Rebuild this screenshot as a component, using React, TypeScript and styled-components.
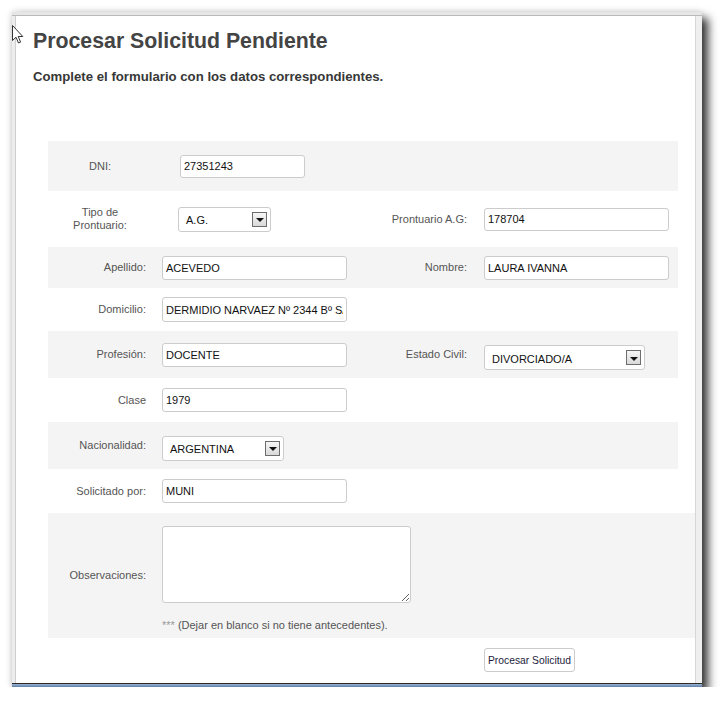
import React from "react";
import styled, { createGlobalStyle } from "styled-components";

const Global = createGlobalStyle`
  html, body { margin: 0; padding: 0; background: #ffffff; }
  body { font-family: "Liberation Sans", Arial, sans-serif; }
  * { box-sizing: border-box; }
`;

const Frame = styled.div`
  position: relative;
  margin: 12px 0 0 12px;
  width: 690px;
  height: 675px;
  display: flex;
  flex-direction: column;
  background: #ffffff;
  box-shadow: 6px 6px 9px rgba(0, 0, 0, 0.8), -1px -1px 6px rgba(0, 0, 0, 0.12);
`;

const TopBar = styled.div`
  height: 4px;
  background: #e6e6e6;
  border-bottom: 1px solid #b9b9b9;
`;

const Middle = styled.div`
  flex: 1;
  display: flex;
  min-height: 0;
`;

const LeftEdge = styled.div`
  width: 4px;
  background: #ededed;
  border-right: 1px solid #cfcfcf;
`;

const RightStrip = styled.div`
  width: 7px;
  background: #efefef;
  border-left: 1px solid #d6d6d6;
`;

const BottomBar = styled.div`
  height: 4px;
  border-top: 1px solid #2b2b2b;
  background: linear-gradient(#9ab3d2, #5f7fa8);
`;

const Content = styled.div`
  flex: 1;
  overflow: hidden;
  padding: 13px 0 0 17px;
  background: #ffffff;
`;

const Title = styled.h1`
  margin: 0;
  font-size: 21.3px;
  line-height: 24px;
  font-weight: bold;
  color: #444444;
`;

const Subtitle = styled.p`
  margin: 16px 0 0 0;
  font-size: 13.2px;
  line-height: 16px;
  font-weight: bold;
  color: #383838;
`;

const Table = styled.div<{ $top?: number }>`
  margin: ${(p) => p.$top ?? 0}px 0 0 15px;
  width: 630px;
`;

const Row = styled.div<{ $h: number; $gray?: boolean; $wide?: boolean; $cols: string }>`
  display: grid;
  grid-template-columns: ${(p) => p.$cols};
  align-items: center;
  height: ${(p) => p.$h}px;
  background: ${(p) => (p.$gray ? "#f4f4f4" : "transparent")};
  width: ${(p) => (p.$wide ? "660px" : "630px")};
`;

const Label = styled.div<{ $center?: boolean; $pr?: number }>`
  font-size: 11px;
  line-height: 13px;
  color: #555555;
  text-align: ${(p) => (p.$center ? "center" : "right")};
  padding-right: ${(p) => p.$pr ?? 16}px;
`;

const Cell = styled.div<{ $pl?: number; $top?: number }>`
  display: flex;
  flex-direction: column;
  align-items: flex-start;
  padding-left: ${(p) => p.$pl ?? 0}px;
  ${(p) => (p.$top !== undefined ? `align-self: start; padding-top: ${p.$top}px;` : "")}
`;

const Input = styled.input<{ $w: number; $h?: number }>`
  width: ${(p) => p.$w}px;
  height: ${(p) => p.$h ?? 24}px;
  border: 1px solid #cccccc;
  border-radius: 3px;
  background: #ffffff;
  padding: 0 3px;
  font-family: "Liberation Sans", Arial, sans-serif;
  font-size: 11px;
  color: #111111;
  outline: none;
`;

const SelectBox = styled.div<{ $w: number; $down?: number }>`
  width: ${(p) => p.$w}px;
  height: 25px;
  margin-top: ${(p) => p.$down ?? 0}px;
  border: 1px solid #cccccc;
  border-radius: 3px;
  background: #ffffff;
  display: flex;
  align-items: center;
  justify-content: space-between;
  padding: 0 3px 0 7px;
  font-size: 11px;
  color: #111111;
`;

const SelectText = styled.span`
  padding-top: 2px;
`;

const ArrowBtn = styled.span`
  width: 15px;
  height: 15px;
  border: 1px solid #6d6d6d;
  background: linear-gradient(#f6f6f6, #d9d9d9);
  display: flex;
  align-items: center;
  justify-content: center;
  &::after {
    content: "";
    width: 0;
    height: 0;
    border-left: 4px solid transparent;
    border-right: 4px solid transparent;
    border-top: 4px solid #111111;
    margin-top: 2px;
  }
`;

const TextArea = styled.textarea`
  width: 249px;
  height: 77px;
  border: 1px solid #cccccc;
  border-radius: 3px;
  background: #ffffff;
  margin: 0;
`;

const Note = styled.div`
  margin-top: 15px;
  font-size: 11px;
  line-height: 14px;
  color: #555555;
`;

const Stars = styled.span`
  color: #9a9a9a;
`;

const ButtonRow = styled.div`
  display: grid;
  grid-template-columns: 436px 194px;
  padding-top: 10px;
`;

const Button = styled.button`
  grid-column: 2;
  justify-self: start;
  height: 24px;
  padding: 0 3px;
  border: 1px solid #cccccc;
  border-radius: 3px;
  background: #ffffff;
  font-family: "Liberation Sans", Arial, sans-serif;
  font-size: 10.3px;
  color: #1c1c3c;
`;

const Cursor = styled.svg`
  position: absolute;
  left: 0px;
  top: 13px;
`;

const T1 = "104px 228px 104px 194px";
const T2 = "114px 218px 104px 194px";

const Select = ({ w, value, down }: { w: number; value: string; down?: number }) => (
  <SelectBox $w={w} $down={down}>
    <SelectText>{value}</SelectText>
    <ArrowBtn />
  </SelectBox>
);

export default function App() {
  return (
    <>
      <Global />
      <Frame>
        <TopBar />
        <Middle>
          <LeftEdge />
          <Content>
            <Title>Procesar Solicitud Pendiente</Title>
            <Subtitle>Complete el formulario con los datos correspondientes.</Subtitle>

            <Table $top={56}>
              <Row $h={50} $gray $cols={T1}>
                <Label $center $pr={0}>DNI:</Label>
                <Cell $pl={28}>
                  <Input $w={125} $h={23} defaultValue="27351243" />
                </Cell>
                <div />
                <div />
              </Row>
              <Row $h={56} $cols={T1}>
                <Label $center $pr={0}>
                  Tipo de
                  <br />
                  Prontuario:
                </Label>
                <Cell $pl={26}>
                  <Select w={93} value="A.G." />
                </Cell>
                <Label $pr={17}>Prontuario A.G:</Label>
                <Cell>
                  <Input $w={185} $h={23} defaultValue="178704" />
                </Cell>
              </Row>
            </Table>

            <Table>
              <Row $h={41} $gray $cols={T2}>
                <Label>Apellido:</Label>
                <Cell>
                  <Input $w={185} defaultValue="ACEVEDO" />
                </Cell>
                <Label $pr={17}>Nombre:</Label>
                <Cell>
                  <Input $w={185} defaultValue="LAURA IVANNA" />
                </Cell>
              </Row>
              <Row $h={43} $cols={T2}>
                <Label>Domicilio:</Label>
                <Cell>
                  <Input $w={185} $h={25} defaultValue="DERMIDIO NARVAEZ Nº 2344 Bº SAN" />
                </Cell>
                <div />
                <div />
              </Row>
              <Row $h={47} $gray $cols={T2}>
                <Label>Profesión:</Label>
                <Cell>
                  <Input $w={185} defaultValue="DOCENTE" />
                </Cell>
                <Label $pr={17}>Estado Civil:</Label>
                <Cell>
                  <Select w={161} value="DIVORCIADO/A" down={6} />
                </Cell>
              </Row>
              <Row $h={44} $cols={T2}>
                <Label>Clase</Label>
                <Cell>
                  <Input $w={185} defaultValue="1979" />
                </Cell>
                <div />
                <div />
              </Row>
              <Row $h={47} $gray $cols={T2}>
                <Label>Nacionalidad:</Label>
                <Cell>
                  <Select w={122} value="ARGENTINA" down={5} />
                </Cell>
                <div />
                <div />
              </Row>
              <Row $h={44} $cols={T2}>
                <Label>Solicitado por:</Label>
                <Cell>
                  <Input $w={185} defaultValue="MUNI" />
                </Cell>
                <div />
                <div />
              </Row>
              <Row $h={125} $gray $wide $cols="114px 546px">
                <Label>Observaciones:</Label>
                <Cell $top={13}>
                  <TextArea />
                  <Note>
                    <Stars>***</Stars> (Dejar en blanco si no tiene antecedentes).
                  </Note>
                </Cell>
              </Row>
              <ButtonRow>
                <Button>Procesar Solicitud</Button>
              </ButtonRow>
            </Table>
          </Content>
          <RightStrip />
        </Middle>
        <BottomBar />
        <Cursor width="12" height="19" viewBox="0 0 12 19">
          <path
            d="M0.5 0.5 L0.5 15.5 L4 12.2 L6.5 18 L8.6 17.1 L6.2 11.5 L10.8 11.5 Z"
            fill="#ffffff"
            stroke="#333333"
            strokeWidth="1"
            strokeLinejoin="round"
          />
        </Cursor>
      </Frame>
    </>
  );
}
